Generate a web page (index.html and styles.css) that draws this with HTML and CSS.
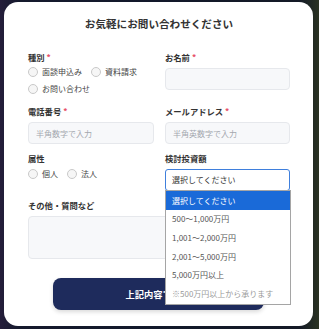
FILE: index.html
```html
<!DOCTYPE html>
<html lang="ja">
<head>
<meta charset="utf-8">
<title>お問い合わせ</title>
<link rel="stylesheet" href="styles.css">
</head>
<body>
<div class="card">
  <h1 class="title">お気軽にお問い合わせください</h1>
  <div class="grid">
    <div class="field">
      <div class="label">種別<span class="req">*</span></div>
      <div class="radios">
        <div class="radio-row">
          <span class="radio"><span class="dot"></span>面談申込み</span>
          <span class="radio"><span class="dot"></span>資料請求</span>
        </div>
        <div class="radio-row">
          <span class="radio"><span class="dot"></span>お問い合わせ</span>
        </div>
      </div>
    </div>
    <div class="field">
      <div class="label">お名前<span class="req">*</span></div>
      <input class="input" type="text">
    </div>
    <div class="field">
      <div class="label">電話番号<span class="req">*</span></div>
      <input class="input" type="text" placeholder="半角数字で入力">
    </div>
    <div class="field">
      <div class="label">メールアドレス<span class="req">*</span></div>
      <input class="input" type="text" placeholder="半角英数字で入力">
    </div>
    <div class="field">
      <div class="label">属性</div>
      <div class="radio-row">
        <span class="radio"><span class="dot"></span>個人</span>
        <span class="radio"><span class="dot"></span>法人</span>
      </div>
    </div>
    <div class="field">
      <div class="label">検討投資額</div>
      <div class="select-wrap">
        <div class="select">選択してください</div>
        <ul class="options">
          <li class="opt selected">選択してください</li>
          <li class="opt">500〜1,000万円</li>
          <li class="opt">1,001〜2,000万円</li>
          <li class="opt">2,001〜5,000万円</li>
          <li class="opt">5,000万円以上</li>
          <li class="opt disabled">※500万円以上から承ります</li>
        </ul>
      </div>
    </div>
    <div class="field wide">
      <div class="label">その他・質問など</div>
      <textarea class="textarea"></textarea>
    </div>
  </div>
  <button class="submit" type="button">上記内容で送信</button>
</div>
</body>
</html>
```

FILE: styles.css
```css
* { box-sizing: border-box; }
html, body {
  margin: 0;
  padding: 0;
}
body {
  width: 319px;
  height: 329px;
  overflow: hidden;
  background: linear-gradient(90deg, #241d3a 0%, #151a2d 6%, #12182a 50%, #141a26 94%, #2a3322 100%);
  font-family: "Noto Sans CJK JP", "Noto Sans", sans-serif;
  color: #333;
}
.card {
  margin: 2px 0 0 4px;
  width: 309px;
  height: 324px;
  background: #fff;
  border-radius: 14px;
  padding: 14px 23px 0 24px;
  display: flex;
  flex-direction: column;
}
.title {
  margin: 0;
  font-size: 10.6px;
  line-height: 16px;
  font-weight: 700;
  text-align: center;
  color: #333;
  letter-spacing: 0;
}
.grid {
  margin-top: 19px;
  display: grid;
  grid-template-columns: 126px 125px;
  column-gap: 11px;
  row-gap: 8px;
}
.field { display: flex; flex-direction: column; }
.field.wide { grid-column: 1 / 3; }
.label {
  font-size: 8.3px;
  line-height: 12px;
  font-weight: 700;
  color: #333;
  margin-bottom: 5px;
}
.req {
  color: #e8546b;
  margin-left: 2px;
}
.radios { display: flex; flex-direction: column; gap: 1px; margin-top: -4px; }
.radio-row {
  display: flex;
  align-items: center;
  gap: 9px;
  height: 16px;
}
.field > .radio-row { margin-top: -3px; }
.radio {
  display: flex;
  align-items: center;
  gap: 4px;
  font-size: 8px;
  line-height: 16px;
  color: #444;
}
.dot {
  width: 10px;
  height: 10px;
  border-radius: 50%;
  border: 1px solid #c9c9c9;
  background: #f6f6f6;
}
.input, .textarea {
  display: block;
  width: 100%;
  height: 22px;
  margin: 0;
  border: 1px solid #e6e8ec;
  border-radius: 4px;
  background: #f7f8fa;
  font-family: inherit;
  font-size: 8px;
  padding: 0 7px;
  color: #333;
  outline: none;
}
.input::placeholder { color: #a3a7ae; }
.textarea {
  height: 43px;
  resize: none;
}
.select-wrap { position: relative; }
.select {
  height: 22px;
  border: 1px solid #3f7fdc;
  border-radius: 3px;
  background: #fff;
  font-size: 8px;
  line-height: 20px;
  padding: 0 6px;
  color: #333;
}
.options {
  position: absolute;
  top: 21px;
  left: 0;
  width: 126px;
  margin: 0;
  padding: 0;
  list-style: none;
  background: #fff;
  border: 1px solid #a5a5a5;
  z-index: 5;
}
.opt {
  height: 18.75px;
  line-height: 18.75px;
  font-size: 8px;
  padding-left: 6px;
  color: #555;
  white-space: nowrap;
}
.opt.selected {
  height: 19px;
  line-height: 19px;
  background: #1a6ad8;
  color: #fff;
}
.opt.disabled { color: #9a9a9a; }
.submit {
  margin: 19px auto 0;
  width: 211px;
  height: 32px;
  border: none;
  border-radius: 8px;
  background: #1e2b5c;
  color: #fff;
  font-family: inherit;
  font-size: 9.3px;
  font-weight: 700;
  box-shadow: 0 2px 4px rgba(0, 0, 0, 0.15);
  position: relative;
  left: -1px;
}
```
